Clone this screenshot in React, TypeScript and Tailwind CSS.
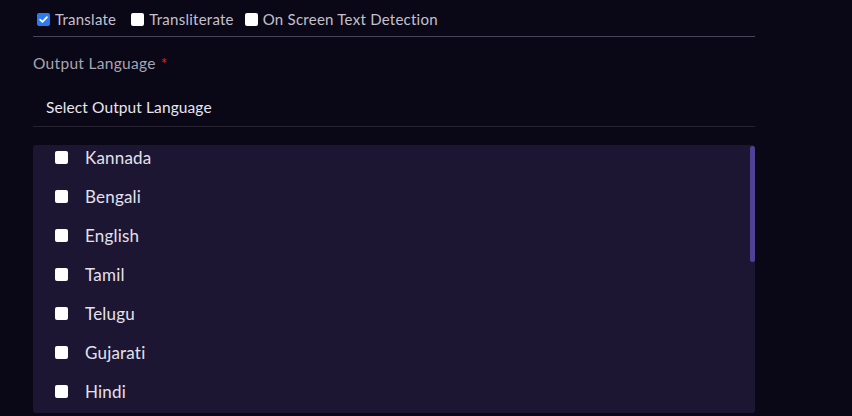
import React from "react";

const langs = ["Kannada", "Bengali", "English", "Tamil", "Telugu", "Gujarati", "Hindi"];

function Box({ checked }: { checked?: boolean }) {
  if (checked) {
    return (
      <span className="flex h-[13px] w-[13px] shrink-0 items-center justify-center rounded-[2px] bg-[#2a7af3]">
        <svg viewBox="0 0 12 12" className="h-[11px] w-[11px]">
          <path d="M2.3 6.2 L4.8 8.6 L9.8 3.4" fill="none" stroke="white" strokeWidth="1.9" strokeLinecap="round" strokeLinejoin="round" />
        </svg>
      </span>
    );
  }
  return <span className="block h-[13px] w-[13px] shrink-0 rounded-[2px] bg-white" />;
}

export default function App() {
  return (
    <div
      className="h-[416px] w-[852px] overflow-hidden bg-[#0a0717] text-[15px]"
      style={{ fontFamily: "Lato, 'Noto Sans', sans-serif" }}
    >
      <div className="ml-[33px] w-[722px]">
        <div className="flex h-[37px] items-center border-b border-[#4a4556] pl-[4px] pt-[2px] tracking-[0.25px] text-[#c4c1cc]">
          <label className="flex items-center gap-[5px]">
            <Box checked />
            <span>Translate</span>
          </label>
          <label className="ml-[15px] flex items-center gap-[5px]">
            <Box />
            <span>Transliterate</span>
          </label>
          <label className="ml-[11px] flex items-center gap-[5px]">
            <Box />
            <span>On Screen Text Detection</span>
          </label>
        </div>
        <div className="mt-[16px] flex h-[22px] items-center text-[15.5px] tracking-[0.3px] text-[#a8a4b2]">
          Output Language <span className="ml-[5px] text-[#e11d2c]">*</span>
        </div>
        <div className="mt-[14px] flex h-[38px] items-center border-b border-[#26222f] pl-[13px] text-[15.5px] tracking-[0.1px] text-[#e8e6ee]">
          Select Output Language
        </div>
        <div className="relative mt-[18px] h-[268px] overflow-hidden rounded-[3px] bg-[#1c1633]">
          <div className="-mt-[7px]">
            {langs.map((l) => (
              <div key={l} className="flex h-[39px] items-center pl-[22px] text-[17px] tracking-[0.2px] text-[#e4e1ec]">
                <Box />
                <span className="ml-[17px]">{l}</span>
              </div>
            ))}
          </div>
          <div className="absolute right-0 top-[1px] h-[116px] w-[5px] rounded-full bg-[#4e4296]" />
        </div>
      </div>
    </div>
  );
}
